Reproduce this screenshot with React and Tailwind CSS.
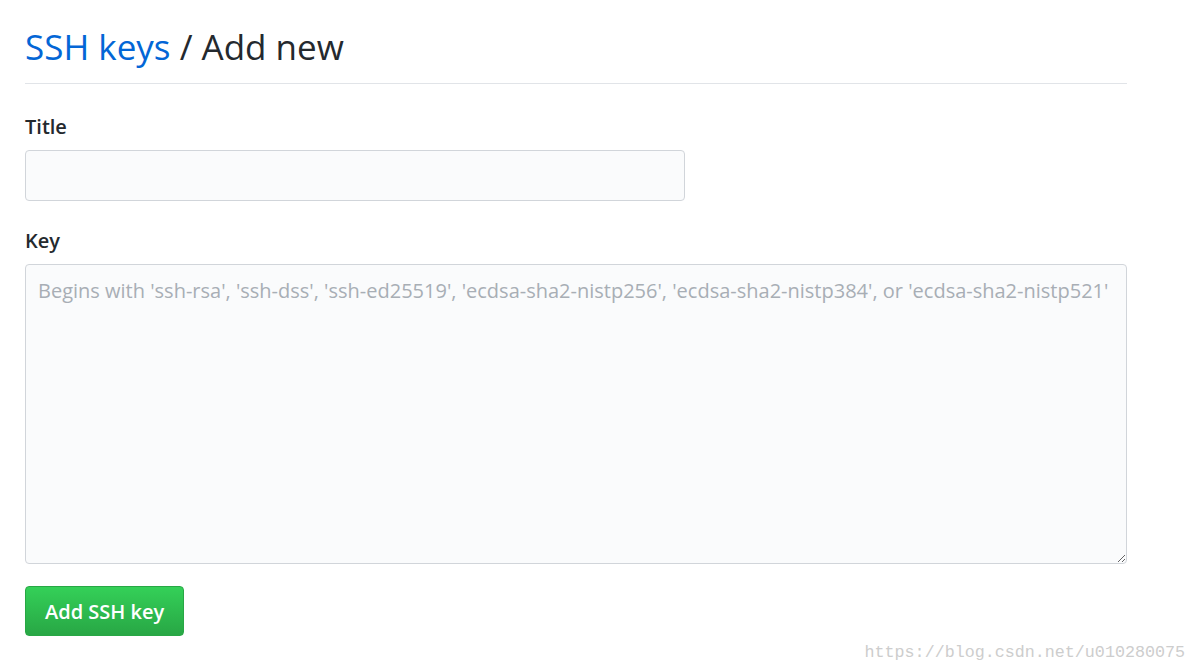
import React from "react";

export default function App() {
  return (
    <div className="relative min-h-[672px] bg-white font-['Open_Sans',sans-serif] text-[#24292e]">
      <div className="w-[1102px] ml-[25px] pt-[23px]">
        {/* heading */}
        <div className="border-b border-[#e1e4e8] pb-[12px]">
          <h1 className="text-[35px] leading-[48px] font-normal">
            <span className="text-[#0366d6]">SSH keys</span> / Add new
          </h1>
        </div>

        <form className="flex flex-col">
          <label className="mt-[28px] text-[20px] leading-[30px] font-semibold">Title</label>
          <input
            type="text"
            className="mt-[8px] w-[660px] h-[51px] rounded-[4px] border border-[#d1d5da] bg-[#fafbfc] px-3 text-[20px] outline-none"
          />

          <label className="mt-[25px] text-[20px] leading-[30px] font-semibold">Key</label>
          <textarea
            placeholder="Begins with 'ssh-rsa', 'ssh-dss', 'ssh-ed25519', 'ecdsa-sha2-nistp256', 'ecdsa-sha2-nistp384', or 'ecdsa-sha2-nistp521'"
            className="mt-[8px] w-full h-[300px] rounded-[4px] border border-[#d1d5da] bg-[#fafbfc] px-3 py-[12px] text-[20px] leading-[28px] placeholder:text-[#a8aeb5] outline-none resize-y"
          />

          <div className="mt-[22px]">
            <button
              type="button"
              className="h-[50px] px-[19px] pt-[2px] rounded-[4px] border border-[#28a745] bg-gradient-to-b from-[#34d058] to-[#28a745] text-white text-[20px] font-semibold"
            >
              Add SSH key
            </button>
          </div>
        </form>
      </div>

      <div className="absolute right-[11px] bottom-[7px] font-['Liberation_Mono',monospace] text-[16.7px] text-[#cdcdcd]">
        https://blog.csdn.net/u010280075
      </div>
    </div>
  );
}
